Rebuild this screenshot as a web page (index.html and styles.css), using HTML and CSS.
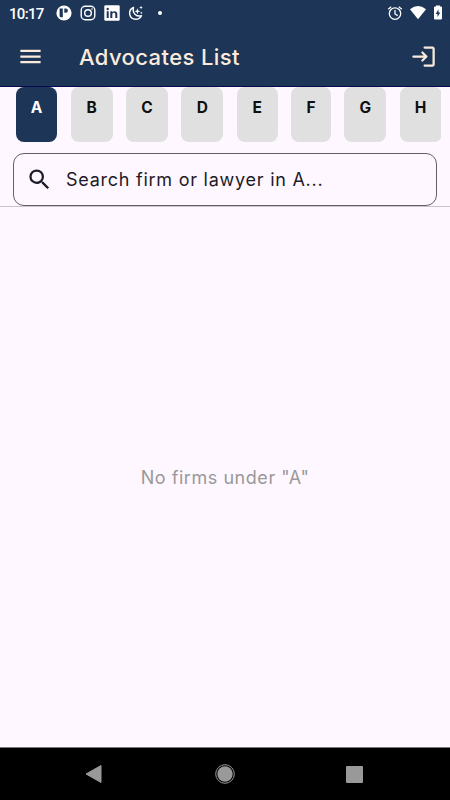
FILE: index.html
```html
<!DOCTYPE html>
<html lang="en">
<head>
<meta charset="utf-8">
<title>Advocates List</title>
<link rel="stylesheet" href="styles.css">
</head>
<body>
<div class="screen">
  <div class="status">
    <span class="clock">10:17</span>
    <div class="notifications">
      <svg width="16" height="16" viewBox="0 0 16 16"><circle cx="8" cy="8" r="7.6" fill="#fff"/><path d="M3.600 3.400h3.200v8.800H5.100a1.500 1.500 0 0 1-1.500-1.500zM8.300 3.400h1.400a2.200 2.200 0 0 1 0 4.400H8.300z" fill="#1d3557"/></svg>
      <svg width="16" height="16" viewBox="0 0 16 16" fill="none" stroke="#fff" stroke-width="1.4"><rect x="1.2" y="1.2" width="13.6" height="13.6" rx="4"/><circle cx="8" cy="8" r="3.3"/><circle cx="12" cy="4" r=".8" fill="#fff" stroke="none"/></svg>
      <svg width="16" height="16" viewBox="0 0 16 16"><rect x=".3" y=".3" width="15.4" height="15.4" rx="1.2" fill="#fff"/><path d="M2.7 6.3h2v6.8h-2zM6.3 6.3h2v1c1.1-1.8 5-1.7 5 1.8v4h-2V9.6c0-2.4-3-2.2-3 0v3.5h-2z" fill="#1d3557"/><circle cx="3.7" cy="4" r="1.2" fill="#1d3557"/></svg>
      <svg width="16" height="16" viewBox="0 0 16 16"><path d="M5.500 2.500C-.6 5.300.8 14.200 7.800 14.200c2.700 0 4.700-1.400 5.700-3.500C8.800 12.200 4 8.500 5.500 2.500z" fill="none" stroke="#fff" stroke-width="1.400" stroke-linejoin="round"/><path d="M9.400 3.200l.8 2.200 2.200.8-2.200.8-.8 2.200-.8-2.200-2.200-.8 2.200-.8zM13 .8l.5 1.300 1.300.5-1.300.5-.5 1.300-.5-1.300-1.300-.5 1.300-.5zM13.300 6.500l.4 1 1 .4-1 .4-.4 1-.4-1-1-.4 1-.4z" fill="#fff"/></svg>
      <i class="dot"></i>
    </div>
    <div class="system">
      <svg width="16" height="16" viewBox="0 0 16 16" fill="none" stroke="#fff" stroke-width="1.3"><circle cx="8" cy="8.600" r="5.700"/><path d="M8 5v4l2.700 1.600M1.200 4.200l3-2.500M14.800 4.200l-3-2.500"/></svg>
      <svg width="18" height="16" viewBox="0 0 18 16"><path d="M1 4.300Q9-2.200 17 4.300L9 14.200z" fill="#fff"/></svg>
      <svg width="10" height="16" viewBox="0 0 10 16"><path d="M3 1.600V.5h4v1.100h1a1 1 0 0 1 1 1v11a1 1 0 0 1-1 1H2a1 1 0 0 1-1-1v-11a1 1 0 0 1 1-1z" fill="#fff"/><path d="M5.500 4.300v3.200h1.800l-2.800 4.600V9H2.700z" fill="#1d3557"/></svg>
    </div>
  </div>
  <header class="appbar">
    <svg width="27" height="27" viewBox="0 0 24 24"><path d="M3 18h18v-2H3zm0-5h18v-2H3zm0-7v2h18V6z" fill="#faebdc"/></svg>
    <h1>Advocates List</h1>
    <svg class="login" width="27" height="27" viewBox="0 0 24 24"><path d="M10.300 7.700a.98.98 0 0 0 0 1.400l1.900 1.900H3c-.55 0-1 .45-1 1s.45 1 1 1h9.200l-1.900 1.900a.98.98 0 0 0 0 1.400c.39.39 1.010.39 1.400 0l3.590-3.590a.996.996 0 0 0 0-1.410L11.700 7.700a.98.98 0 0 0-1.400 0zM20 19h-7c-.55 0-1 .45-1 1s.45 1 1 1h7c1.100 0 2-.9 2-2V5c0-1.100-.9-2-2-2h-7c-.55 0-1 .45-1 1s.45 1 1 1h7z" fill="#faebdc"/></svg>
  </header>
  <nav class="letters">
    <span class="chip active">A</span><span class="chip">B</span><span class="chip">C</span><span class="chip">D</span><span class="chip chip-e">E</span><span class="chip chip-f">F</span><span class="chip">G</span><span class="chip">H</span>
  </nav>
  <div class="search">
    <svg width="27" height="27" viewBox="0 0 24 24"><path d="M15.500 14h-.79l-.28-.27A6.470 6.470 0 0 0 16 9.500 6.500 6.500 0 1 0 9.500 16c1.610 0 3.090-.59 4.230-1.570l.27.28v.79l5 4.990L20.490 19zm-6 0a4.500 4.500 0 1 1 0-9 4.500 4.500 0 0 1 0 9z" fill="#1d1b28"/></svg>
    <span>Search firm or lawyer in A...</span>
  </div>
  <main class="empty"><span>No firms under "A"</span></main>
  <footer class="navbar">
    <svg width="18" height="20" viewBox="0 0 18 20"><path d="M1 10L16 1.500v17z" fill="#999" stroke="#999" stroke-linejoin="round"/></svg>
    <svg width="20" height="20" viewBox="0 0 20 20"><circle cx="10" cy="10" r="9.300" fill="none" stroke="#999"/><circle cx="10" cy="10" r="7.700" fill="#999"/></svg>
    <i class="square"></i>
  </footer>
</div>
</body>
</html>
```
FILE: styles.css
```css
* { box-sizing: border-box; }
body { margin: 0; font-family: Inter, "Liberation Sans", sans-serif; }
svg { display: block; flex: none; }
.screen { width: 450px; height: 800px; display: flex; flex-direction: column; background: #fef7ff; overflow: hidden; }
.status { height: 27px; background: #1d3557; display: flex; align-items: center; padding: 0 7px 1px 9px; color: #fff; }
.clock { font: 500 15px/20px Roboto, sans-serif; width: 46.500px; letter-spacing: -.7px; padding-top: 2px; }
.notifications { display: flex; align-items: center; gap: 8px; }
.dot { width: 4px; height: 4px; border-radius: 50%; background: #fff; margin-left: 6px; }
.system { display: flex; align-items: center; margin-left: auto; gap: 6px; }
.appbar { height: 60px; background: #1d3557; border-bottom: 1px solid #08084c; display: flex; align-items: center; padding: 0 13px 0 17px; }
.appbar h1 { margin: 0 0 0 35px; font-size: 22px; font-weight: 500; line-height: 30px; color: #faebdc; white-space: nowrap; letter-spacing: .4px; }
.login { margin-left: auto; }
.letters { height: 55px; margin: 0 9px 0 15.500px; display: flex; gap: 13.400px; overflow: hidden; flex: none; }
.chip { width: 41.900px; height: 55px; flex: none; border-radius: 8px; background: #e0e0e0; color: #101010; text-align: center; font-size: 15.500px; font-weight: 700; line-height: 41px; }
.chip.active { background: #1d3557; color: #fff; }
.chip-e { width: 41px; }
.chip-f { width: 40px; }
.search { height: 53px; margin: 11px 13px 0; border: 1px solid #64606b; border-radius: 11px; display: flex; align-items: center; padding-left: 12px; flex: none; color: #1d1b28; }
.search span { margin-left: 13px; font-size: 18px; line-height: 24px; letter-spacing: .75px; white-space: nowrap; }
.empty { flex: 1; border-top: 1px solid #c9c4ce; display: flex; align-items: center; justify-content: center; font-size: 18px; color: #999; letter-spacing: .55px; }
.navbar { height: 53px; background: #000; border-top: 1px solid #777; display: flex; align-items: center; justify-content: space-between; padding: 0 87px 0 85px; flex: none; }
.square { width: 17px; height: 17px; border-radius: 1px; background: #999; }
```
